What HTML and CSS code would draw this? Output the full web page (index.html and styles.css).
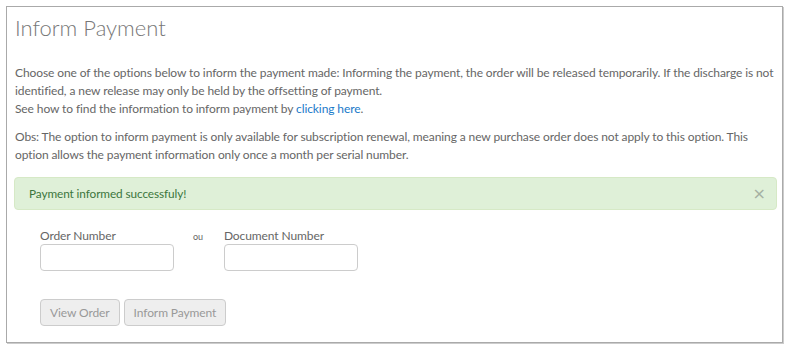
FILE: index.html
```html
<!DOCTYPE html>
<html lang="en">

<head>
    <meta charset="UTF-8">
    <meta name="viewport" content="width=device-width, initial-scale=1.0">
    <title>Inform Payment</title>
    <link rel="stylesheet" href="styles.css">
</head>

<body>
    <div class="panel">
        <h1>Inform Payment</h1>

        <p>Choose one of the options below to inform the payment made: Informing the payment, the order will be released temporarily. If the discharge is not identified, a new release may only be held by the offsetting of payment.<br>
            See how to find the information to inform payment by <a href="#">clicking here</a>.</p>

        <p>Obs: The option to inform payment is only available for subscription renewal, meaning a new purchase order does not apply to this option. This option allows the payment information only once a month per serial number.</p>

        <div class="alert">
            <span>Payment informed successfuly!</span>
            <button class="close">&times;</button>
        </div>

        <form class="payment-form">
            <div class="fields">
                <div class="field">
                    <label for="orderNumber">Order Number</label>
                    <input type="text" id="orderNumber">
                </div>
                <span class="or">ou</span>
                <div class="field">
                    <label for="documentNumber">Document Number</label>
                    <input type="text" id="documentNumber">
                </div>
            </div>

            <div class="actions">
                <button type="button" class="btn" disabled>View Order</button>
                <button type="button" class="btn" disabled>Inform Payment</button>
            </div>
        </form>
    </div>
</body>

</html>
```

FILE: styles.css
```css
* {
    margin: 0;
    padding: 0;
    box-sizing: border-box;
}

body {
    font-family: 'Lato', 'Noto Sans', sans-serif;
    font-size: 12px;
    letter-spacing: -0.1px;
    line-height: 18px;
    color: #666;
    background-color: white;
    padding: 6px;
}

.panel {
    border: 1px solid #aaa;
    box-shadow: 1px 1px 0 #ccc;
    padding: 6px 5px 16px 8px;
    height: 337px;
}

h1 {
    font-weight: 300;
    font-size: 22px;
    letter-spacing: 0;
    line-height: 30px;
    color: #777;
    margin: 0 0 21px 0;
}

p {
    margin-bottom: 10px;
}

a {
    color: #1a7ac9;
    text-decoration: none;
}

.alert {
    display: flex;
    justify-content: space-between;
    align-items: center;
    background-color: #dff0d8;
    border: 1px solid #d6e9c6;
    border-radius: 4px;
    color: #3c763d;
    padding: 7px 10px 7px 14px;
    margin: 13px 0 18px -1px;
    height: 33px;
    font-size: 11.8px;
}

.close {
    background: none;
    border: none;
    font-size: 16px;
    color: #a5b0a2;
    cursor: pointer;
    font-family: 'DejaVu Sans', sans-serif;
}

.payment-form {
    padding-left: 25px;
}

.fields {
    display: flex;
    align-items: flex-start;
    gap: 19px;
}

.field {
    display: flex;
    flex-direction: column;
}

label {
    font-size: 12px;
    line-height: 16px;
    color: #666;
}

input {
    width: 134px;
    height: 27px;
    border: 1px solid #ccc;
    border-radius: 4px;
}

.or {
    font-size: 9px;
    color: #666;
    line-height: 16px;
    padding-top: 1px;
    margin-right: 2px;
}

.actions {
    display: flex;
    gap: 4px;
    margin-top: 28px;
}

.btn {
    font-family: inherit;
    font-size: 12px;
    letter-spacing: inherit;
    color: #999;
    background-color: #eee;
    border: 1px solid #ccc;
    border-radius: 4px;
    padding: 0 9px;
    height: 27px;
}
```
